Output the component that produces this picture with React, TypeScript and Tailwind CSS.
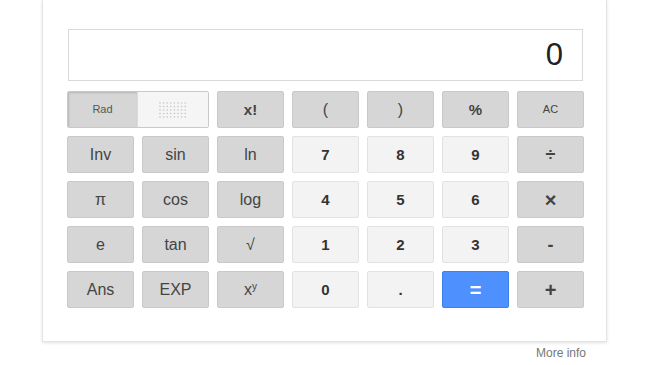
import React from "react";

type Key = { label: React.ReactNode; kind: "fn" | "num" | "eq"; cls?: string };

const FN = "bg-[#d6d6d6] border-[#c9c9c9] text-[#444]";
const NUM = "bg-[#f3f3f3] border-[#e2e2e2] text-[#333]";

const ROWS: Key[][] = [
  [
    { label: "x!", kind: "fn", cls: "font-bold text-[15px]" },
    { label: "(", kind: "fn", cls: "text-[16px]" },
    { label: ")", kind: "fn", cls: "text-[16px]" },
    { label: "%", kind: "fn", cls: "font-bold text-[15px]" },
    { label: "AC", kind: "fn", cls: "text-[11px]" },
  ],
  [
    { label: "Inv", kind: "fn", cls: "text-[16px]" },
    { label: "sin", kind: "fn", cls: "text-[16px]" },
    { label: "ln", kind: "fn", cls: "text-[16px]" },
    { label: "7", kind: "num" },
    { label: "8", kind: "num" },
    { label: "9", kind: "num" },
    { label: "÷", kind: "fn", cls: "font-bold text-[18px]" },
  ],
  [
    { label: "π", kind: "fn", cls: "text-[16px]" },
    { label: "cos", kind: "fn", cls: "text-[16px]" },
    { label: "log", kind: "fn", cls: "text-[16px]" },
    { label: "4", kind: "num" },
    { label: "5", kind: "num" },
    { label: "6", kind: "num" },
    { label: "×", kind: "fn", cls: "font-bold text-[20px]" },
  ],
  [
    { label: "e", kind: "fn", cls: "text-[16px]" },
    { label: "tan", kind: "fn", cls: "text-[16px]" },
    { label: "√", kind: "fn", cls: "text-[16px]" },
    { label: "1", kind: "num" },
    { label: "2", kind: "num" },
    { label: "3", kind: "num" },
    { label: "-", kind: "fn", cls: "font-bold text-[18px]" },
  ],
  [
    { label: "Ans", kind: "fn", cls: "text-[16px]" },
    { label: "EXP", kind: "fn", cls: "text-[16px]" },
    {
      label: (
        <span>
          x<sup className="text-[10px]">y</sup>
        </span>
      ),
      kind: "fn",
      cls: "text-[16px]",
    },
    { label: "0", kind: "num" },
    { label: ".", kind: "num" },
    { label: "=", kind: "eq" },
    { label: "+", kind: "fn", cls: "font-bold text-[20px]" },
  ],
];

function Btn({ k }: { k: Key }) {
  const base =
    k.kind === "eq"
      ? "bg-[#4d90fe] border-[#3f7fe8] text-white font-bold text-[20px]"
      : k.kind === "num"
      ? NUM + " font-bold text-[15px]"
      : FN;
  return (
    <div
      className={`h-[37px] rounded-[2px] border flex items-center justify-center leading-none ${base} ${k.cls ?? ""}`}
    >
      {k.label}
    </div>
  );
}

function Dots() {
  const dots = [];
  for (let r = 0; r < 5; r++)
    for (let c = 0; c < 8; c++)
      dots.push(<circle key={`${r}-${c}`} cx={1 + c * 3.6} cy={1 + r * 3.5} r={0.8} fill="#c4c4c4" />);
  return (
    <svg width="28" height="16" viewBox="0 0 28 16">
      {dots}
    </svg>
  );
}

export default function App() {
  return (
    <div className="w-[650px] h-[365px] bg-white overflow-hidden" style={{ fontFamily: '"Liberation Sans", Arial, sans-serif' }}>
      <div className="ml-[42px] w-[565px] border border-t-0 border-[#e4e4e4] bg-white shadow-[0_1px_3px_rgba(0,0,0,0.12)] pt-[29px] pb-[33px] pl-[24px]">
        <div className="ml-px w-[515px] h-[52px] border border-[#d9d9d9] flex items-center justify-end pr-[19px] text-[31px] text-[#222]">
          0
        </div>
        <div className="mt-[10px] grid grid-cols-[repeat(7,67px)] gap-x-[8px] gap-y-[8px]">
          <div className="col-span-2 h-[37px] flex rounded-[2px] border border-[#c9c9c9] overflow-hidden">
            <div className="w-[69px] bg-[#d6d6d6] shadow-[inset_1px_1px_2px_rgba(0,0,0,0.15)] flex items-center justify-center text-[11px] text-[#555]">
              Rad
            </div>
            <div className="flex-1 bg-[#f5f5f5] border-l border-[#dcdcdc] flex items-center justify-center">
              <Dots />
            </div>
          </div>
          {ROWS.flat().map((k, i) => (
            <Btn key={i} k={k} />
          ))}
        </div>
      </div>
      <div className="w-[586px] text-right text-[12px] text-[#777] mt-[4px] leading-[14px]">More info</div>
    </div>
  );
}
